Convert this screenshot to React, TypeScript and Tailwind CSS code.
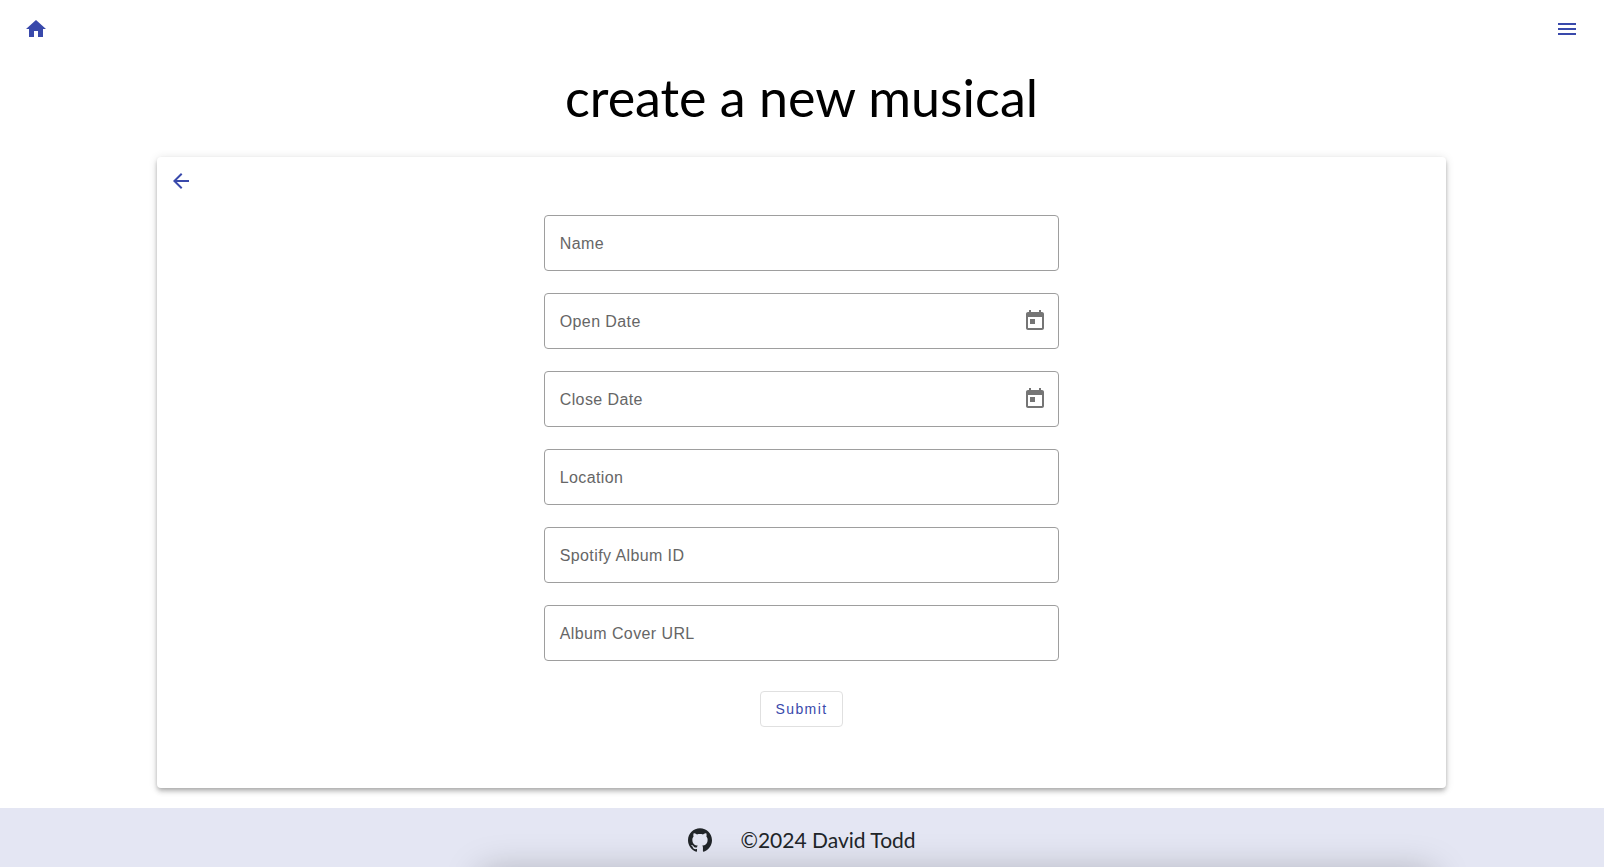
import React from "react";

type Field = { id: string; label: string; date?: boolean };

const fields: Field[] = [
  { id: "name", label: "Name" },
  { id: "open-date", label: "Open Date", date: true },
  { id: "close-date", label: "Close Date", date: true },
  { id: "location", label: "Location" },
  { id: "spotify-album-id", label: "Spotify Album ID" },
  { id: "album-cover-url", label: "Album Cover URL" },
];

function Icon({ d, className = "size-6" }: { d: string; className?: string }) {
  return (
    <svg viewBox="0 0 24 24" fill="currentColor" aria-hidden="true" className={className}>
      <path d={d} />
    </svg>
  );
}

const HOME = "M10 20v-6h4v6h5v-8h3L12 3 2 12h3v8z";
const MENU = "M3 18h18v-2H3v2zm0-5h18v-2H3v2zm0-7v2h18V6H3z";
const BACK = "M20 11H7.83l5.59-5.59L12 4l-8 8 8 8 1.41-1.41L7.83 13H20v-2z";
const CALENDAR =
  "M19 3h-1V1h-2v2H8V1H6v2H5c-1.11 0-1.99.9-1.99 2L3 19c0 1.1.89 2 2 2h14c1.1 0 2-.9 2-2V5c0-1.1-.9-2-2-2zm0 16H5V8h14v11zM7 10h5v5H7z";
const GITHUB =
  "M12 .297c-6.63 0-12 5.373-12 12 0 5.303 3.438 9.8 8.205 11.385.6.113.82-.258.82-.577 0-.285-.01-1.04-.015-2.04-3.338.724-4.042-1.61-4.042-1.61C4.422 18.07 3.633 17.7 3.633 17.7c-1.087-.744.084-.729.084-.729 1.205.084 1.838 1.236 1.838 1.236 1.07 1.835 2.809 1.305 3.495.998.108-.776.417-1.305.76-1.605-2.665-.3-5.466-1.332-5.466-5.93 0-1.31.465-2.38 1.235-3.22-.135-.303-.54-1.523.105-3.176 0 0 1.005-.322 3.3 1.23.96-.267 1.98-.399 3-.405 1.02.006 2.04.138 3 .405 2.28-1.552 3.285-1.23 3.285-1.23.645 1.653.24 2.873.12 3.176.765.84 1.23 1.91 1.23 3.22 0 4.61-2.805 5.625-5.475 5.92.42.36.81 1.096.81 2.22 0 1.606-.015 2.896-.015 3.286 0 .315.21.69.825.57C20.565 22.092 24 17.592 24 12.297c0-6.627-5.373-12-12-12";

function TextField({ id, label, date }: Field) {
  return (
    <div className="relative flex h-14 items-center rounded border border-[#9e9e9e] focus-within:border-[#3f51b5]">
      <input
        id={id}
        type="text"
        placeholder=" "
        className="peer h-full min-w-0 flex-1 bg-transparent px-4 text-base text-black/90 outline-none"
      />
      <label
        htmlFor={id}
        className="pointer-events-none absolute top-1/2 left-[15px] -translate-y-1/2 bg-white pt-0.5 text-base leading-6 tracking-wide text-[#666666] peer-focus:top-0 peer-focus:text-xs peer-[:not(:placeholder-shown)]:top-0 peer-[:not(:placeholder-shown)]:text-xs"
      >
        {label}
      </label>
      {date && (
        <button type="button" aria-label={`Choose ${label.toLowerCase()}`} className="p-[11px] text-[#757575]">
          <Icon d={CALENDAR} />
        </button>
      )}
    </div>
  );
}

export default function App() {
  return (
    <div className="flex min-h-screen flex-col bg-white font-['Liberation_Sans',sans-serif]">
      <header className="flex items-center justify-between pt-[5px] pr-[13px] pl-3 text-[#3949ab]">
        <a href="#home" aria-label="Home" className="p-3">
          <Icon d={HOME} />
        </a>
        <button type="button" aria-label="Menu" className="p-3">
          <Icon d={MENU} />
        </button>
      </header>

      <main className="flex flex-1 flex-col pr-[158px] pb-5 pl-[157px]">
        <h1 className="pt-2 pb-6 text-center font-['Lato',sans-serif] text-[52px] leading-[72px] text-black">
          create a new musical
        </h1>
        <section className="flex-1 rounded bg-white pb-[61px] shadow-[0_2px_4px_-1px_rgba(0,0,0,0.2),0_4px_5px_0_rgba(0,0,0,0.14),0_1px_10px_0_rgba(0,0,0,0.12)]">
          <a href="#back" aria-label="Back" className="inline-flex p-3 text-[#3949ab]">
            <Icon d={BACK} />
          </a>
          <form className="mx-auto flex w-2/5 flex-col gap-[22px] pt-[10px]">
            {fields.map((f) => (
              <TextField key={f.id} {...f} />
            ))}
            <button
              type="submit"
              className="mt-2 h-9 self-center rounded border border-[#e0e0e0] px-[15px] text-sm font-normal tracking-widest text-[#3949ab]"
            >
              Submit
            </button>
          </form>
        </section>
      </main>

      <footer className="relative flex h-[59px] items-center justify-center gap-7 overflow-hidden bg-[#e4e6f3] pt-[5px] text-[#212529]">
        <a href="#github" aria-label="GitHub">
          <Icon d={GITHUB} />
        </a>
        <p className="font-['Lato',sans-serif] text-[21px] leading-7">©2024 David Todd</p>
        <div className="pointer-events-none absolute top-16 right-[170px] left-[30%] h-20 rounded-lg shadow-[0_0_36px_rgba(0,0,0,0.26)]" />
      </footer>
    </div>
  );
}
